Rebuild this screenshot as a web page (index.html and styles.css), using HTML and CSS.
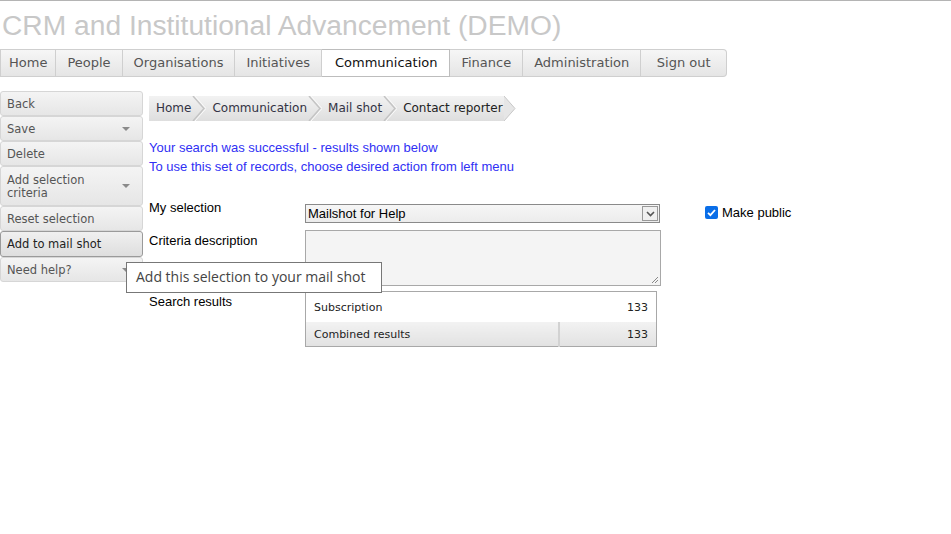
FILE: index.html
```html
<!DOCTYPE html>
<html>
<head>
<meta charset="utf-8">
<link rel="stylesheet" href="styles.css">
</head>
<body>
<div class="title">CRM and Institutional Advancement (DEMO)</div>
<nav class="tabs">
  <span class="tab">Home</span>
  <span class="tab">People</span>
  <span class="tab">Organisations</span>
  <span class="tab">Initiatives</span>
  <span class="tab active">Communication</span>
  <span class="tab">Finance</span>
  <span class="tab">Administration</span>
  <span class="tab last">Sign out</span>
</nav>
<div class="layout">
  <aside class="side">
    <div class="btn">Back</div>
    <div class="btn drop">Save</div>
    <div class="btn">Delete</div>
    <div class="btn drop two">Add selection<br>criteria</div>
    <div class="btn">Reset selection</div>
    <div class="btn hover">Add to mail shot</div>
    <div class="btn drop">Need help?</div>
    <div class="tooltip">Add this selection to your mail shot</div>
  </aside>
  <main class="main">
    <div class="crumbs">
      <span class="crumb">Home</span>
      <svg class="chev" width="14" height="25" viewBox="0 0 14 25"><path d="M1 0 L12 12.5 L1 25" fill="none" stroke="#c4c4c4" stroke-width="1.5"/><path d="M3 0 L14 12.5 L3 25" fill="none" stroke="#fafafa" stroke-width="1"/></svg>
      <span class="crumb">Communication</span>
      <svg class="chev" width="14" height="25" viewBox="0 0 14 25"><path d="M1 0 L12 12.5 L1 25" fill="none" stroke="#c4c4c4" stroke-width="1.5"/><path d="M3 0 L14 12.5 L3 25" fill="none" stroke="#fafafa" stroke-width="1"/></svg>
      <span class="crumb">Mail shot</span>
      <svg class="chev" width="14" height="25" viewBox="0 0 14 25"><path d="M1 0 L12 12.5 L1 25" fill="none" stroke="#c4c4c4" stroke-width="1.5"/><path d="M3 0 L14 12.5 L3 25" fill="none" stroke="#fafafa" stroke-width="1"/></svg>
      <span class="crumb cur">Contact reporter</span>
      <svg class="chev endchev" width="12" height="25" viewBox="0 0 12 25"><path d="M0 0 L11 12.5 L0 25 Z" fill="#e6e6e6"/><path d="M0 0 L11 12.5 L0 25" fill="none" stroke="#c8c8c8" stroke-width="1"/></svg>
    </div>
    <div class="msg">
      <div>Your search was successful - results shown below</div>
      <div>To use this set of records, choose desired action from left menu</div>
    </div>
    <div class="form">
      <div class="row">
        <div class="label first">My selection</div>
        <div class="select">
          <span>Mailshot for Help</span>
          <span class="arrow"><svg width="9" height="6" viewBox="0 0 9 6"><path d="M1 1 L4.5 4.5 L8 1" fill="none" stroke="#555" stroke-width="1.6"/></svg></span>
        </div>
        <label class="check"><span class="box"><svg width="13" height="13" viewBox="0 0 13 13"><rect width="13" height="13" rx="2" fill="#0a6ee8"/><path d="M3 6.8 L5.4 9.2 L10 4" fill="none" stroke="#fff" stroke-width="1.8"/></svg></span>Make public</label>
      </div>
      <div class="row r-desc">
        <div class="label">Criteria description</div>
        <div class="textarea"><svg class="grip" width="8" height="8" viewBox="0 0 8 8"><path d="M7 1 L1 7 M7 4 L4 7" stroke="#888" stroke-width="1"/></svg></div>
      </div>
      <div class="row r-res">
        <div class="label">Search results</div>
        <table class="results">
          <tr class="r1"><td>Subscription</td><td class="num">133</td></tr>
          <tr class="r2"><td>Combined results</td><td class="num">133</td></tr>
        </table>
      </div>
    </div>
  </main>
</div>
</body>
</html>
```
FILE: styles.css
```css
html, body { margin: 0; padding: 0; background: #fff; }
body {
  border-top: 1px solid #b4b4b4;
  font-family: "Liberation Sans", Arial, sans-serif;
  font-size: 13px;
  color: #000;
  width: 951px;
  height: 533px;
  overflow: hidden;
}
.title {
  font-size: 28.2px;
  color: #c8c8c8;
  padding: 8px 0 0 2px;
  height: 40px;
  line-height: 32px;
  box-sizing: border-box;
}
.tabs {
  display: flex;
  margin-top: 8px;
  width: 727px;
  height: 28px;
  box-sizing: border-box;
}
.tab {
  font-family: "DejaVu Sans", Verdana, sans-serif;
  font-size: 13px;
  color: #555;
  padding: 0 11px;
  line-height: 26px;
  border: 1px solid #cfcfcf;
  border-left: none;
  background: linear-gradient(#f6f6f6, #e5e5e5);
  white-space: nowrap;
}
.tab:first-child { border-left: 1px solid #cfcfcf; padding: 0 8px; }
.tab.active { background: #fff; color: #111; border-color: #bdbdbd; padding: 0 12px 0 13px; }
.tab.last { border-radius: 0 4px 4px 0; flex: 1; text-align: center; padding: 0; }
.layout { display: flex; margin-top: 14px; }
.side { width: 143px; position: relative; flex: none; }
.btn {
  font-family: "DejaVu Sans", Verdana, sans-serif;
  font-size: 11.5px;
  color: #555;
  height: 25px;
  box-sizing: border-box;
  border: 1px solid #d6d6d6;
  border-radius: 3px;
  background: linear-gradient(#f4f4f4, #e6e6e6);
  padding: 0 0 0 6px;
  line-height: 25px;
  position: relative;
}
.btn.two { height: 40px; line-height: 13px; padding-top: 7px; }
.btn.hover { border-color: #9a9a9a; color: #222; background: linear-gradient(#f0f0f0, #dedede); height: 26px; }
.btn.drop::after {
  content: "";
  position: absolute;
  right: 12px;
  top: 10px;
  border-left: 4px solid transparent;
  border-right: 4px solid transparent;
  border-top: 4px solid #8a8a8a;
}
.btn.two::after { top: 17px; }
.tooltip {
  position: absolute;
  left: 126px;
  top: 171px;
  width: 256px;
  height: 31px;
  box-sizing: border-box;
  border: 1px solid #777;
  background: #fff;
  font-family: "Open Sans", "Segoe UI", sans-serif;
  font-size: 14px;
  color: #444;
  line-height: 28px;
  padding-left: 9px;
  white-space: nowrap;
  z-index: 2;
}
.main { margin-left: 6px; flex: 1; }
.crumbs {
  display: inline-flex;
  margin-top: 5px;
  height: 25px;
  background: linear-gradient(#f2f2f2, #dedede);
  font-family: "DejaVu Sans", Verdana, sans-serif;
  font-size: 12px;
  color: #333344;
  align-items: center;
}
.crumb { padding: 0 1px 0 6px; line-height: 25px; }
.crumb:first-child { padding-left: 7px; }
.crumb.cur { color: #222; padding-right: 1px; }
.chev { display: block; flex: none; }
.endchev { margin-right: -12px; background: #fff; }
.msg {
  margin-top: 17px;
  color: #3030f4;
  font-size: 13px;
  line-height: 19px;
}
.form { margin-top: 28px; }
.row { display: flex; align-items: flex-start; }
.label { width: 156px; flex: none; font-size: 13px; line-height: 15px; margin-top: 3px; }
.label.first { margin-top: -4px; }
.select {
  width: 355px;
  height: 19px;
  box-sizing: border-box;
  border: 1px solid #8a8a8a;
  background: linear-gradient(#f6f6f6, #ececec);
  display: flex;
  align-items: center;
  justify-content: space-between;
  font-size: 13px;
  padding-left: 2px;
}
.arrow {
  width: 16px;
  height: 15px;
  box-sizing: border-box;
  border: 1px solid #999;
  margin-right: 1px;
  display: flex;
  align-items: center;
  justify-content: center;
  background: #f0f0f0;
}
.check { display: flex; align-items: center; margin-left: 45px; margin-top: 1px; font-size: 13px; }
.box { width: 13px; height: 13px; margin-right: 4px; display: block; }
.box svg { display: block; }
.r-desc { margin-top: 7px; }
.textarea {
  width: 356px;
  height: 56px;
  box-sizing: border-box;
  border: 1px solid #a8a8a8;
  background: #f4f4f4;
  position: relative;
}
.grip { position: absolute; right: 1px; bottom: 1px; }
.r-res { margin-top: 5px; }
.results {
  width: 352px;
  border-collapse: collapse;
  border: 1px solid #a8a8a8;
  font-family: "DejaVu Sans", Verdana, sans-serif;
  font-size: 11px;
  color: #222;
}
.results td { padding: 0 8px; }
.r1 td { height: 30px; background: #fff; }
.r2 td { height: 24px; background: linear-gradient(#f2f2f2, #e2e2e2); }
.r2 td + td { border-left: 2px solid #d2d2d2; }
.num { text-align: right; width: 80px; }
```
